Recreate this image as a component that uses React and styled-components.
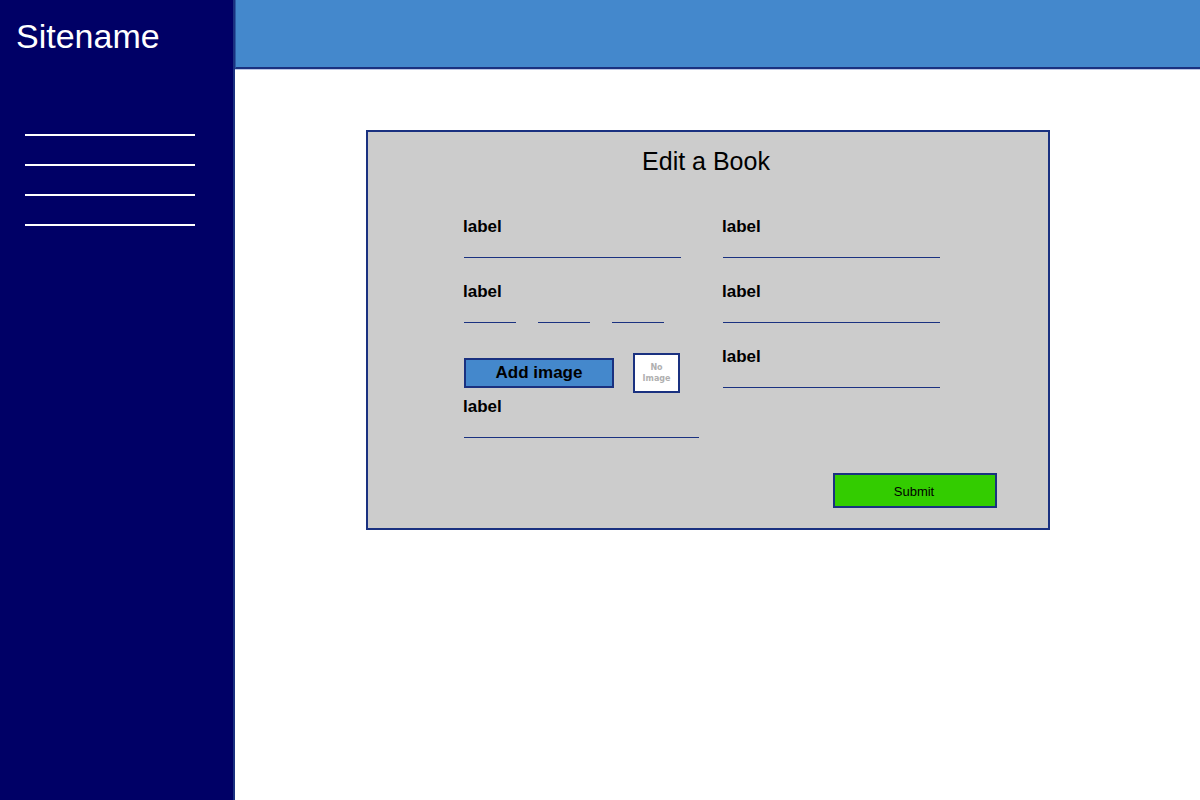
import React from "react";
import styled, { createGlobalStyle } from "styled-components";

const navy = "#1a3180";

const GlobalStyle = createGlobalStyle`
  *, *::before, *::after { box-sizing: border-box; }
  body {
    margin: 0;
    background: #fff;
    color: #000;
    font-family: "Liberation Sans", Arial, sans-serif;
  }
`;

const Page = styled.div`
  display: flex;
  min-height: 100vh;
`;

const Sidebar = styled.aside`
  flex: 0 0 235px;
  padding: 17px 16px 0;
  background: #000066;
  border-right: 2px solid ${navy};
`;

const SiteName = styled.h1`
  margin: 0;
  color: #fff;
  font-size: 34px;
  font-weight: 400;
  line-height: 38px;
`;

const Nav = styled.nav`
  display: flex;
  flex-direction: column;
  width: 170px;
  margin: 51px 0 0 9px;
`;

const NavLink = styled.a`
  height: 30px;
  border-bottom: 2px solid #fff;
`;

const Content = styled.div`
  flex: 1;
  min-width: 0;
`;

const TopBar = styled.header`
  height: 69px;
  background: #4488cc;
  border-left: 1px solid #2c5ca5;
  border-bottom: 2px solid ${navy};
  box-shadow: 0 1px 0 #bcc6e4;
`;

const Main = styled.main`
  padding: 61px 150px 61px 131px;
`;

const Card = styled.form`
  padding: 13px 51px 20px 95px;
  background: #cccccc;
  border: 2px solid ${navy};
`;

const Title = styled.h2`
  margin: 0 48px 39px 0;
  font-size: 25px;
  font-weight: 400;
  line-height: 32px;
  text-align: center;
`;

const Columns = styled.div`
  display: flex;
  gap: 23px;
`;

const Column = styled.div`
  display: flex;
  flex-direction: column;
  gap: 23px;
  width: 236px;
`;

const Group = styled.div`
  display: flex;
  flex-direction: column;
  gap: 3px;
  padding-top: 7px;
`;

const Field = styled.div`
  display: flex;
  flex-direction: column;
`;

const Label = styled.label`
  font-size: 17px;
  font-weight: 700;
  line-height: 22px;
`;

const Inputs = styled.div`
  display: flex;
  gap: 22px;
  padding-left: 1px;
`;

const inputWidths = { small: "52px", medium: "217px", large: "235px" };

const Input = styled.input`
  width: ${({ $size }) => inputWidths[$size]};
  height: 20px;
  padding: 0;
  border: 0;
  border-bottom: 1px solid ${navy};
  border-radius: 0;
  background: transparent;
  font: inherit;
  outline: none;
`;

const ImageRow = styled.div`
  display: flex;
  align-items: center;
  gap: 19px;
  padding-left: 1px;
`;

const Button = styled.button`
  padding: 0;
  border: 2px solid ${navy};
  color: #000;
  font-family: inherit;
  cursor: pointer;
`;

const AddButton = styled(Button)`
  width: 150px;
  height: 30px;
  background: #4488cc;
  font-size: 17px;
  font-weight: 700;
`;

const Preview = styled.div`
  display: flex;
  align-items: center;
  justify-content: center;
  width: 47px;
  height: 40px;
  border: 2px solid ${navy};
  background: #fff;
  color: #b0b0b0;
  font-family: "DejaVu Sans", sans-serif;
  font-size: 8px;
  font-weight: 700;
  line-height: 11px;
  text-align: center;
`;

const Actions = styled.div`
  display: flex;
  justify-content: flex-end;
  margin-top: 35px;
`;

const SubmitButton = styled(Button)`
  width: 164px;
  height: 35px;
  padding: 2px 2px 0 0;
  background: #33cc00;
  font-size: 13px;
`;

function TextField({ id, size = "medium" }) {
  return (
    <Field>
      <Label htmlFor={id}>label</Label>
      <Inputs>
        <Input id={id} type="text" $size={size} />
      </Inputs>
    </Field>
  );
}

export default function App() {
  return (
    <Page>
      <GlobalStyle />
      <Sidebar>
        <SiteName>Sitename</SiteName>
        <Nav aria-label="Main">
          {[1, 2, 3, 4].map((n) => (
            <NavLink key={n} href={`#section-${n}`} aria-label={`Section ${n}`} />
          ))}
        </Nav>
      </Sidebar>
      <Content>
        <TopBar />
        <Main>
          <Card onSubmit={(event) => event.preventDefault()}>
            <Title>Edit a Book</Title>
            <Columns>
              <Column>
                <TextField id="book-first" />
                <Field>
                  <Label htmlFor="book-part-1">label</Label>
                  <Inputs>
                    <Input id="book-part-1" type="text" $size="small" />
                    <Input type="text" aria-label="label, part 2" $size="small" />
                    <Input type="text" aria-label="label, part 3" $size="small" />
                  </Inputs>
                </Field>
                <Group>
                  <ImageRow>
                    <AddButton type="button">Add image</AddButton>
                    <Preview>
                      No
                      <br />
                      Image
                    </Preview>
                  </ImageRow>
                  <TextField id="book-last" size="large" />
                </Group>
              </Column>
              <Column>
                <TextField id="book-second" />
                <TextField id="book-third" />
                <TextField id="book-fourth" />
              </Column>
            </Columns>
            <Actions>
              <SubmitButton type="submit">Submit</SubmitButton>
            </Actions>
          </Card>
        </Main>
      </Content>
    </Page>
  );
}
